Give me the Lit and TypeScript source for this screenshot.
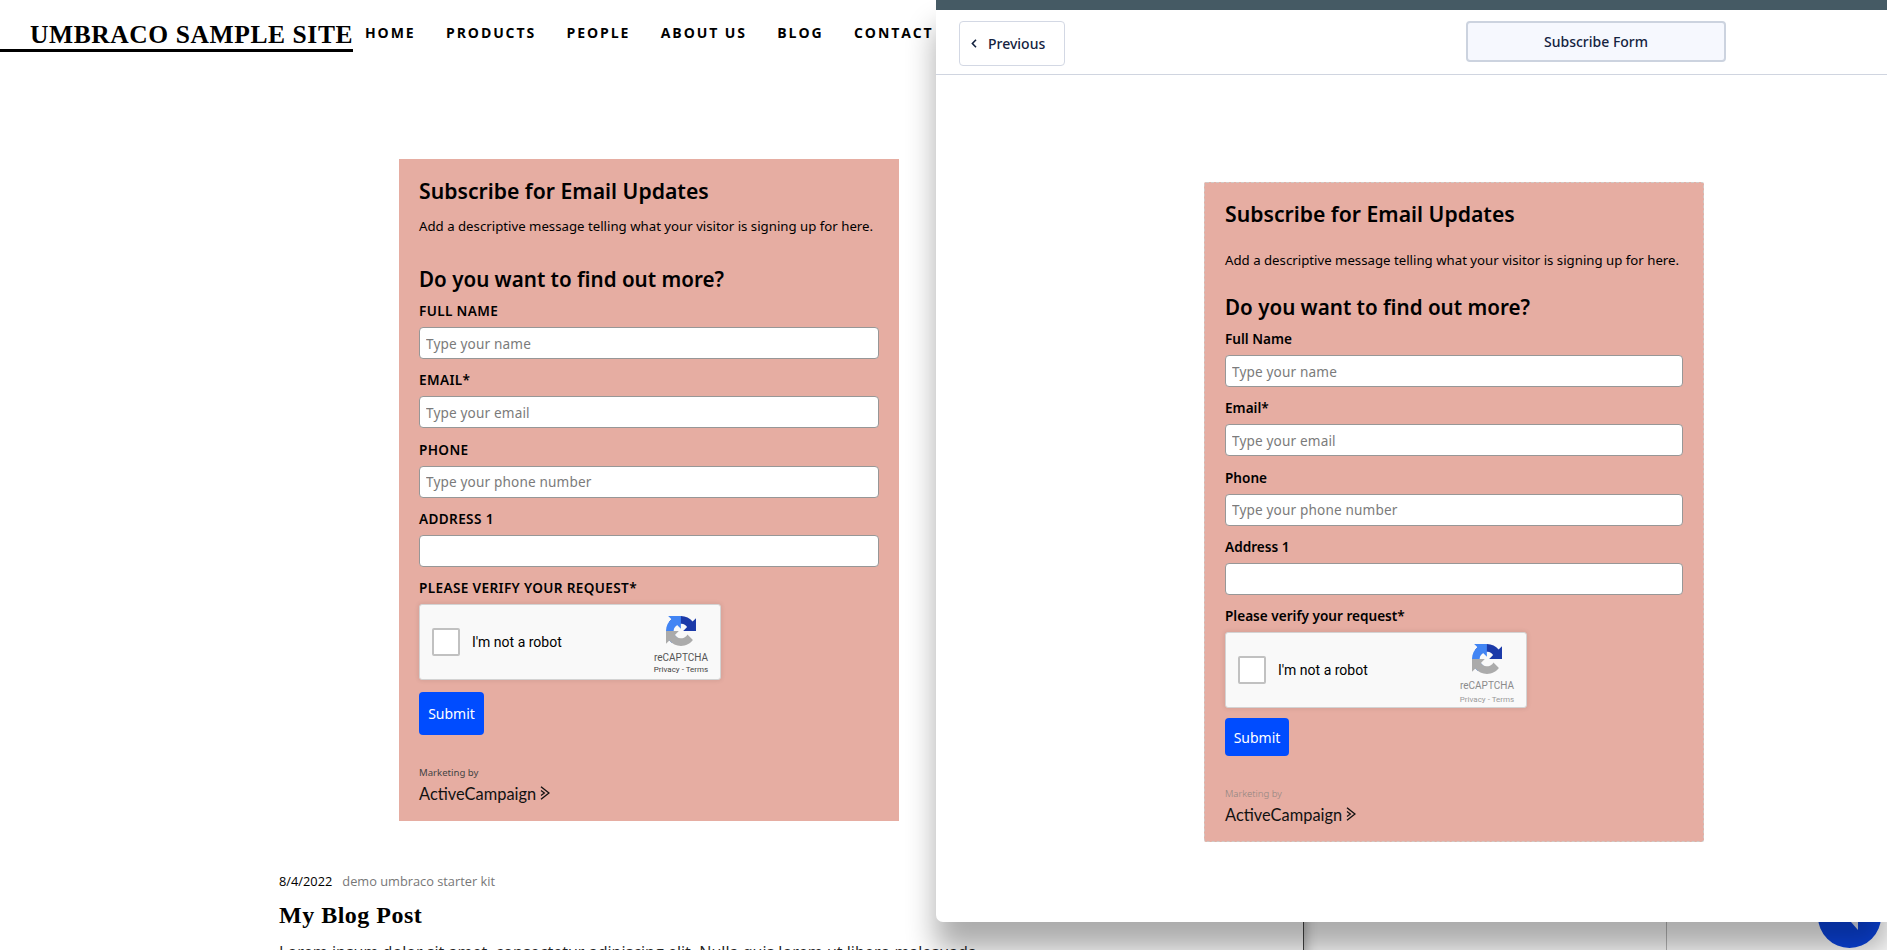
import { LitElement, html, css } from "lit";
import { customElement, property } from "lit/decorators.js";

const recaptchaLogo = html`<svg class="rc-logo" viewBox="0 0 64 64" aria-hidden="true">
  <path d="M64 31.955l-.033-1.37V4.687l-7.16 7.16C50.948 4.674 42.033.093 32.05.093c-10.4 0-19.622 4.96-25.458 12.64l11.736 11.86a15.55 15.55 0 0 1 4.754-5.334c2.05-1.6 4.952-2.906 8.968-2.906.485 0 .86.057 1.135.163 4.976.393 9.29 3.14 11.83 7.124l-8.307 8.307c10.522-.04 22.4-.066 27.295.006" fill="#1c3aa9"/>
  <path d="M31.862.002l-1.37.033H4.594l7.16 7.16C4.58 13.055 0 21.97 0 31.953c0 10.4 4.96 19.622 12.64 25.458L24.5 45.676a15.55 15.55 0 0 1-5.334-4.754c-1.6-2.05-2.906-4.952-2.906-8.968 0-.485.057-.86.163-1.135.393-4.976 3.14-9.29 7.124-11.83l8.307 8.307c-.04-10.522-.066-22.4.006-27.295" fill="#4285f4"/>
  <path d="M.002 31.953l.033 1.37v25.898l7.16-7.16c5.86 7.173 14.775 11.754 24.76 11.754 10.4 0 19.622-4.96 25.458-12.64l-11.736-11.86a15.55 15.55 0 0 1-4.754 5.334c-2.05 1.6-4.952 2.906-8.968 2.906-.485 0-.86-.057-1.135-.163-4.976-.393-9.29-3.14-11.83-7.124l8.307-8.307c-10.522.04-22.4.066-27.295-.006" fill="#ababab"/>
</svg>`;

@customElement("sub-form")
class SubForm extends LitElement {
  @property() variant = "site";
  static styles = css`
    :host { display: block; width: 500px; }
    .form { box-sizing: border-box; width: 500px; background: #e6ada2; color: #000; font-family: "Noto Sans", sans-serif; }
    .site { padding: 16px 20px 18px; }
    .preview { padding: 15px 20px 17px 20px; border: 1px dashed #cfc9c6; border-radius: 2px; }
    h2 { margin: 0; font-size: 21.2px; line-height: 32px; font-weight: 600; }
    .msg { margin: 9px 0 0; font-size: 13.22px; line-height: 20px; white-space: nowrap; }
    .preview .msg { margin-top: 20px; }
    h3 { margin: 28px 0 0; font-size: 20.6px; line-height: 30px; font-weight: 600; }
    .preview h3 { margin-top: 22px; }
    .fields { margin-top: 7px; }
    .field { height: 69.33px; }
    .label { display: block; font-size: 13.6px; line-height: 20px; font-weight: 600; margin-bottom: 6px; }
    .site .label { text-transform: uppercase; letter-spacing: .35px; }
    input { display: block; box-sizing: border-box; width: 100%; height: 32px; padding: 0 6px; border: 1px solid #979797; border-radius: 4px; background: #fff; font: 13.6px "Noto Sans", sans-serif; letter-spacing: .15px; outline: none; }
    input::placeholder { color: #7b7b7b; opacity: 1; }
    .captcha { box-sizing: border-box; width: 302px; height: 76px; background: #f9f9f9; border: 1px solid #d3d3d3; border-radius: 3px; box-shadow: 0 0 4px 1px rgba(0,0,0,.08); display: flex; align-items: center; font-family: Roboto, sans-serif; }
    .check { box-sizing: border-box; width: 28px; height: 28px; margin-left: 12px; background: #fff; border: 2px solid #c1c1c1; border-radius: 2px; }
    .robot { margin-left: 12px; font-size: 14px; color: #000; }
    .brand { margin-left: auto; width: 70px; margin-right: 4px; text-align: center; color: #555; display: flex; flex-direction: column; align-items: center; align-self: flex-start; padding-top: 11px; }
    .rc-logo { width: 30px; height: 30px; display: block; margin-bottom: 5px; }
    .rc-name { font-size: 10px; line-height: 13px; }
    .rc-links { font-size: 8px; line-height: 11px; color: #444; white-space: nowrap; }
    .preview .brand { color: #8b8b8b; }
    .preview .rc-links { color: #9a9a9a; margin-top: 2px; }
    button { display: block; width: 65px; border: 0; border-radius: 4px; background: #004cff; color: #fff; font: 14px "Noto Sans", sans-serif; padding: 0; }
    .site button { height: 43px; margin-top: 12px; }
    .preview button { height: 38px; margin-top: 10px; width: 64px; }
    .mkt { margin-top: 31px; font-size: 9.6px; line-height: 14px; color: #444; }
    .preview .mkt { color: #8e8480; font-weight: 300; }
    .ac { margin-top: 3px; display: flex; align-items: center; gap: 4px; height: 20px; font-family: Lato, sans-serif; font-size: 16.4px; color: #111; }
    .ac svg { width: 10px; height: 14px; display: block; }
  `;
  render() {
    const v = this.variant;
    const labels = [["Full Name", "Type your name"], ["Email*", "Type your email"], ["Phone", "Type your phone number"], ["Address 1", ""]];
    return html`<div class="form ${v}">
      <h2>Subscribe for Email Updates</h2>
      <p class="msg">Add a descriptive message telling what your visitor is signing up for here.</p>
      <h3>Do you want to find out more?</h3>
      <div class="fields">
        ${labels.map(([l, p]) => html`<div class="field"><span class="label">${l}</span><input placeholder=${p} /></div>`)}
        <span class="label">Please verify your request*</span>
        <div class="captcha">
          <div class="check"></div><span class="robot">I'm not a robot</span>
          <div class="brand">${recaptchaLogo}<div class="rc-name">reCAPTCHA</div><div class="rc-links">Privacy - Terms</div></div>
        </div>
      </div>
      <button>Submit</button>
      <div class="mkt">Marketing by</div>
      <div class="ac"><span>ActiveCampaign</span>
        <svg viewBox="0 0 10 14" fill="none" stroke="#111"><path d="M1 .8 9 7 1 13.2" stroke-width="1.4"/><path d="M1 4.4 4.4 7 1 9.6" stroke-width="1.2"/></svg>
      </div>
    </div>`;
  }
}

@customElement("app-root")
class AppRoot extends LitElement {
  static styles = css`
    :host { display: block; position: relative; width: 1887px; height: 950px; overflow: hidden; background: #fff; }
    .header { display: flex; align-items: flex-start; height: 159px; }
    .logo { box-sizing: border-box; width: 353px; height: 52px; padding: 20px 0 0 30px; border-bottom: 3px solid #000; font: 700 25.5px/29px "Liberation Serif", serif; letter-spacing: .6px; white-space: nowrap; color: #000; }
    nav { display: flex; gap: 30.5px; margin: 22px 0 0 12px; font: 700 14px/21px "Open Sans", sans-serif; letter-spacing: 1.9px; color: #000; white-space: nowrap; }
    .site-form { margin-left: 399px; }
    article { padding: 50px 0 0 279px; font-family: "Open Sans", sans-serif; }
    .meta { display: flex; gap: 10px; font-size: 12.8px; line-height: 20px; }
    .meta span:last-child { color: #777; }
    h1 { margin: 8px 0 0; font: 700 24px/32px "Liberation Serif", serif; letter-spacing: .5px; color: #000; }
    article p { margin: 9px 0 0; font-size: 16.15px; line-height: 24px; white-space: nowrap; color: #222; }
    .behind { position: absolute; left: 1303px; top: 880px; width: 584px; height: 70px; box-sizing: border-box; background: #fff; border-left: 1px solid #444; box-shadow: inset 14px 0 12px -12px rgba(0,0,0,.3); }
    .behind i { position: absolute; left: 362px; top: 0; bottom: 0; width: 1px; background: #bbb; }
    .bubble { position: absolute; left: 1818px; top: 885px; width: 63px; height: 63px; border-radius: 50%; background: #0b46e6; }
    .bubble svg { position: absolute; left: 33px; top: 37px; width: 7px; height: 8px; }
    .panel { position: absolute; left: 936px; top: 0; width: 951px; height: 922px; background: #fff; border-bottom-left-radius: 7px; box-shadow: 0 28px 30px rgba(0,0,0,.33); }
    .bar { height: 10px; background: #455a64; }
    .tools { box-sizing: border-box; height: 65px; border-bottom: 1px solid #d0d5e0; display: flex; align-items: flex-start; padding: 11px 0 0 23px; }
    .prev { box-sizing: border-box; width: 106px; height: 45px; border: 1px solid #d3d8e4; border-radius: 4px; display: flex; align-items: center; gap: 11px; padding-left: 11px; font: 500 14px "Noto Sans", sans-serif; color: #14233f; background: #fff; }
    .prev svg { width: 6px; height: 9px; }
    .tab { box-sizing: border-box; width: 260px; height: 41px; margin-left: 401px; background: #f6f8fe; border: 2px solid #ccd3df; border-radius: 4px; display: flex; align-items: center; justify-content: center; font: 500 14px "Noto Sans", sans-serif; color: #14233f; padding-bottom: 1px; }
    .stage { padding: 107px 0 0 268px; }
  `;
  render() {
    return html`
      <div class="header">
        <div class="logo">UMBRACO SAMPLE SITE</div>
        <nav><span>HOME</span><span>PRODUCTS</span><span>PEOPLE</span><span>ABOUT US</span><span>BLOG</span><span>CONTACT</span></nav>
      </div>
      <sub-form class="site-form" variant="site"></sub-form>
      <article>
        <div class="meta"><span>8/4/2022</span><span>demo umbraco starter kit</span></div>
        <h1>My Blog Post</h1>
        <p>Lorem ipsum dolor sit amet, consectetur adipiscing elit. Nulla quis lorem ut libero malesuada</p>
      </article>
      <div class="behind"><i></i></div>
      <div class="bubble"><svg viewBox="0 0 7 8"><path d="M0 0H7V8Z" fill="#e8eefc"/></svg></div>
      <section class="panel">
        <div class="bar"></div>
        <div class="tools">
          <div class="prev"><svg viewBox="0 0 6 9" fill="none" stroke="#14233f" stroke-width="1.6"><path d="M5 .8 1.4 4.5 5 8.2"/></svg>Previous</div>
          <div class="tab">Subscribe Form</div>
        </div>
        <div class="stage"><sub-form variant="preview"></sub-form></div>
      </section>
    `;
  }
}
